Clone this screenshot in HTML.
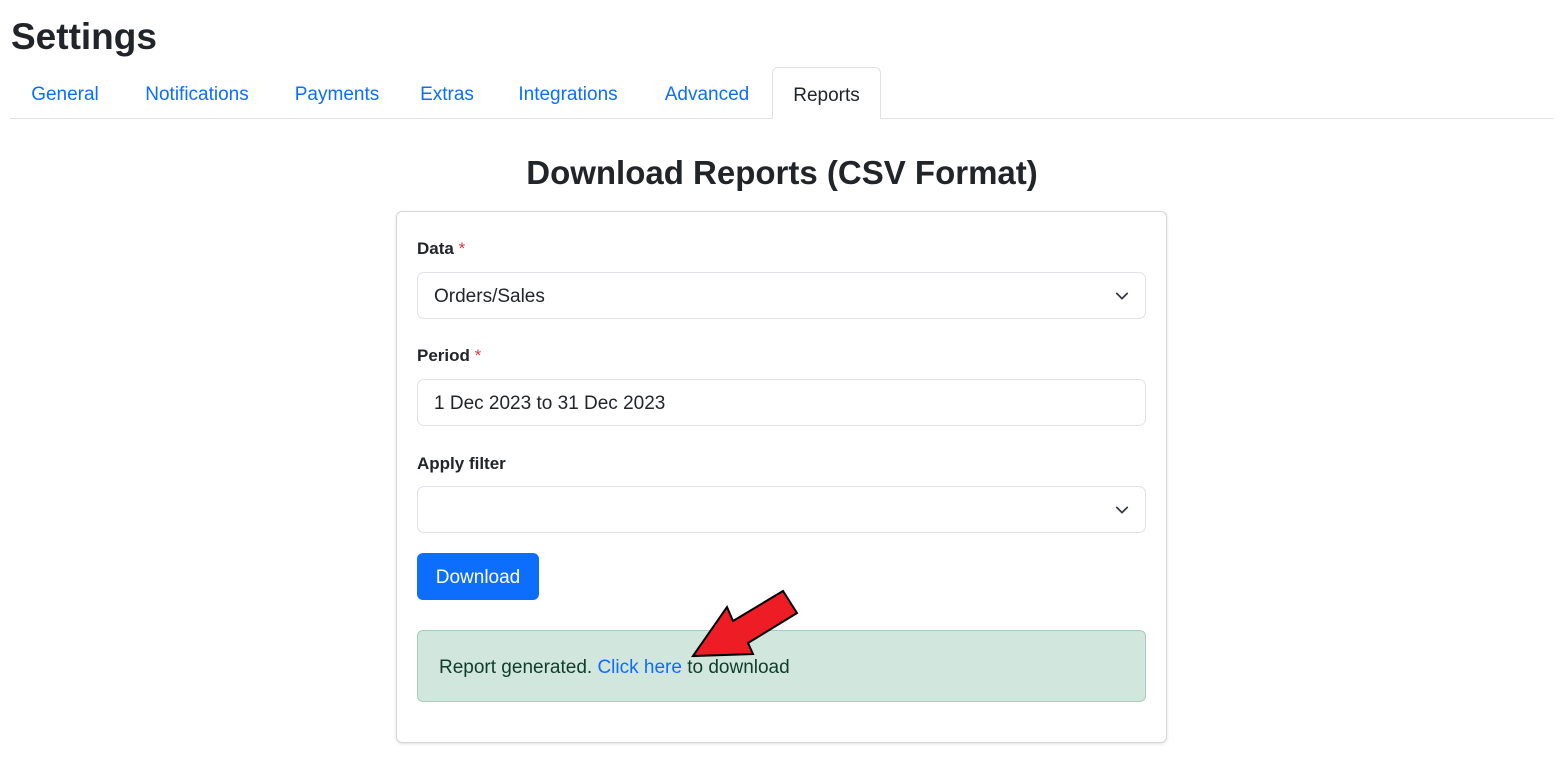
<!DOCTYPE html>
<html><head><meta charset="utf-8"><style>
body{margin:0;background:#fff;font-family:"Liberation Sans",sans-serif;color:#212529;width:1564px;height:763px;position:relative;overflow:hidden}
.abs{position:absolute}
h1{position:absolute;left:11px;top:13px;margin:0;font-size:37px;font-weight:bold;line-height:48px}
.tabs{position:absolute;left:10px;top:67px;width:1543px;height:51px;border-bottom:1px solid #dee2e6}
.tab{position:absolute;top:0;height:51px;line-height:56px;font-size:19px;color:#0d6efd;text-align:center}
.tab.active{color:#212529;border:1px solid #dee2e6;border-bottom:1px solid #fff;border-radius:6px 6px 0 0;background:#fff;height:51px;box-sizing:border-box}
h2{position:absolute;left:0;width:1564px;text-align:center;top:151px;margin:0;font-size:33px;font-weight:bold;line-height:44px}
.card{position:absolute;left:396px;top:211px;width:769px;height:530px;border:1px solid #d6d6d6;border-radius:6px;box-shadow:0 1px 3px rgba(0,0,0,.12)}
.lbl{position:absolute;left:417px;font-size:17px;font-weight:bold}
.lbl span{color:#dc3545;font-weight:normal}
.inp{position:absolute;left:417px;border:1px solid #dee2e6;border-radius:7px;font-size:19px;line-height:47px;padding-left:16px;box-sizing:border-box;width:729px;height:47px}
.inp svg{position:absolute;right:16px;top:16px}
.btn{position:absolute;left:417px;top:553px;width:122px;height:47px;background:#0d6efd;color:#fff;border-radius:6px;font-size:19px;line-height:49px;text-align:center}
.alert{position:absolute;left:417px;top:630px;width:729px;height:72px;box-sizing:border-box;background:#d1e7dd;border:1px solid #a3cfbb;border-radius:6px;font-size:19px;line-height:73px;padding-left:21px;color:#0f3d2a}
.alert a{color:#0d6efd;text-decoration:none}
</style></head><body>
<h1>Settings</h1>
<div class="tabs">
<div class="tab" style="left:0;width:110px">General</div>
<div class="tab" style="left:110px;width:154px">Notifications</div>
<div class="tab" style="left:264px;width:126px">Payments</div>
<div class="tab" style="left:390px;width:94px">Extras</div>
<div class="tab" style="left:484px;width:148px">Integrations</div>
<div class="tab" style="left:632px;width:130px">Advanced</div>
<div class="tab active" style="left:762px;width:109px;height:52px">Reports</div>
</div>
<h2>Download Reports (CSV Format)</h2>
<div class="card"></div>
<div class="lbl" style="top:239px">Data <span>*</span></div>
<div class="inp" style="top:272px">Orders/Sales<svg width="14" height="14" viewBox="0 0 16 16"><path d="M2 5l6 6 6-6" fill="none" stroke="#343a40" stroke-width="2" stroke-linecap="round" stroke-linejoin="round"/></svg></div>
<div class="lbl" style="top:346px">Period <span>*</span></div>
<div class="inp" style="top:379px">1 Dec 2023 to 31 Dec 2023</div>
<div class="lbl" style="top:454px">Apply filter</div>
<div class="inp" style="top:486px"><svg width="14" height="14" viewBox="0 0 16 16"><path d="M2 5l6 6 6-6" fill="none" stroke="#343a40" stroke-width="2" stroke-linecap="round" stroke-linejoin="round"/></svg></div>
<div class="btn">Download</div>
<div class="alert">Report generated. <a>Click here</a> to download</div>
<svg class="abs" style="left:0;top:0" width="1564" height="763"><polygon points="693,656 727,607 733,621 783,591 797,613 748,643 753,654" fill="#ee1c25" stroke="#000" stroke-width="2" stroke-linejoin="miter"/></svg>
</body></html>
